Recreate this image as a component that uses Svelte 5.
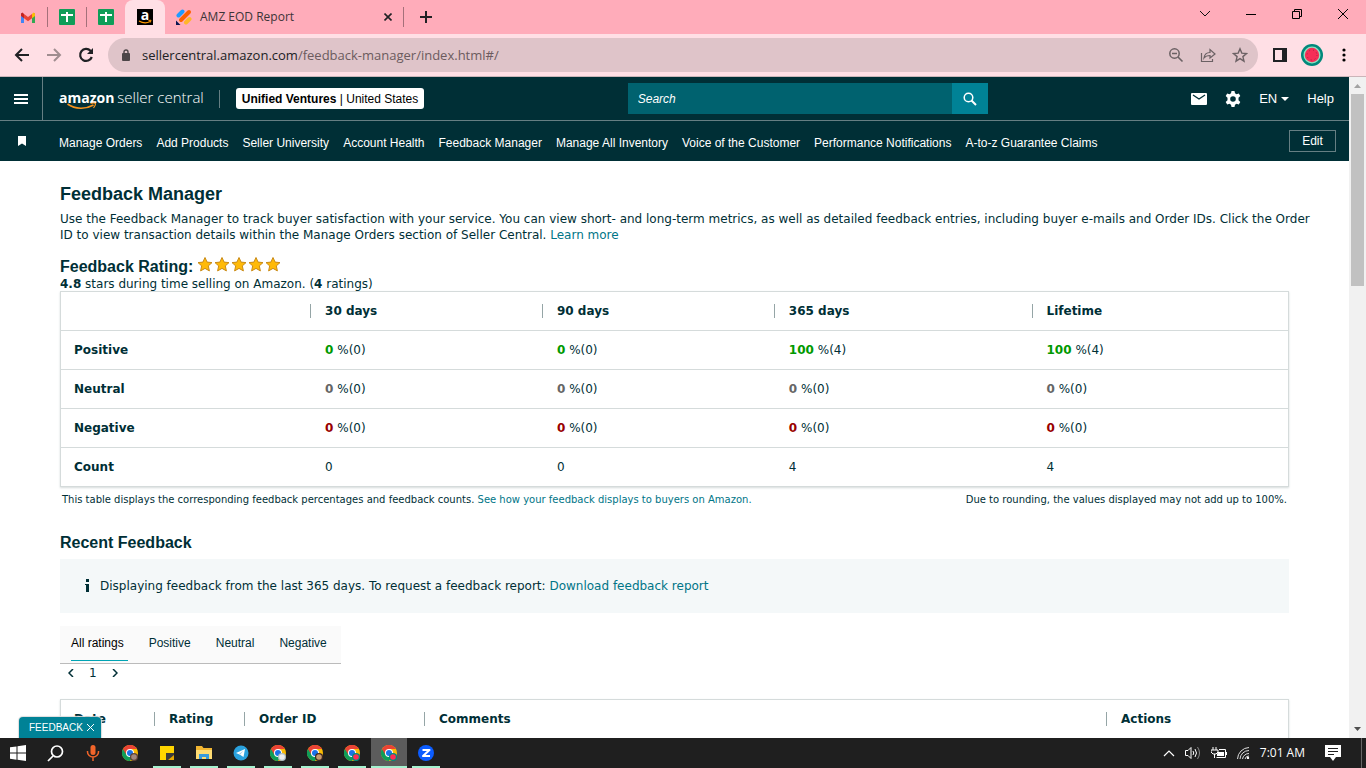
<script>
	const navLinks = [
		"Manage Orders", "Add Products", "Seller University", "Account Health", "Feedback Manager",
		"Manage All Inventory", "Voice of the Customer", "Performance Notifications", "A-to-z Guarantee Claims",
	];
	const periods = ["30 days", "90 days", "365 days", "Lifetime"];
	const rows = [
		{name: "Positive", type: "positive", values: [[0, 0], [0, 0], [100, 4], [100, 4]]},
		{name: "Neutral", type: "neutral", values: [[0, 0], [0, 0], [0, 0], [0, 0]]},
		{name: "Negative", type: "negative", values: [[0, 0], [0, 0], [0, 0], [0, 0]]},
	];
	const counts = [0, 0, 4, 4];
	const filters = ["All ratings", "Positive", "Neutral", "Negative"];
	const columns = ["Date", "Rating", "Order ID", "Comments", "Actions"];
	const apps = [
		{name: "Chrome", icon: "chrome", badge: "#5d4037", dot: "#a1887f"},
		{name: "Sticky Notes", icon: "notes", open: true},
		{name: "File Explorer", icon: "folder", open: true},
		{name: "Telegram", icon: "telegram", open: true},
		{name: "Chrome profile 2", icon: "chrome", badge: "#b0bec5", dot: "#eceff1", open: true},
		{name: "Chrome profile 3", icon: "chrome", badge: "#3e2723", dot: "#c99a6b", open: true},
		{name: "Chrome profile 4", icon: "chrome", badge: "#00897b", dot: "#ff2d55", open: true},
		{name: "Chrome profile 5", icon: "chrome", badge: "#00897b", dot: "#ff2d55", open: true, active: true},
		{name: "Zoom", icon: "zoom", open: true},
	];

	let filter = $state("All ratings");
	let query = $state("");
	let url = $state("sellercentral.amazon.com/feedback-manager/index.html#/");
	let showWidget = $state(true);
	let host = $derived(url.split("/")[0]);
</script>

{#snippet sheet()}
	<svg width="16" height="16" viewBox="0 0 16 16"><rect width="16" height="16" rx="1" fill="#0f9d58" /><path d="M7 3h2v2h5v2H9v6H7V7H2V5h5z" fill="#fff" /></svg>
{/snippet}

{#snippet chrome(app)}
	<svg width="16" height="16" viewBox="0 0 16 16">
		<circle cx="8" cy="8" r="8" fill="#fbbc04" />
		<path d="M1 4a8 8 0 0 0 7 12l3.500-6L8 8z" fill="#0f9d58" />
		<path d="M8 4h7A8 8 0 0 0 1 4l3.500 6z" fill="#ea4335" />
		<circle cx="8" cy="8" r="4" fill="#fff" />
		<circle cx="8" cy="8" r="3" fill="#1a73e8" />
		<circle cx="12" cy="12" r="4" fill={app.badge} />
		<circle cx="12" cy="12" r="2.800" fill={app.dot} />
	</svg>
{/snippet}

<div class="window">
	<div class="tabs">
		<button class="tab" aria-label="Gmail">
			<svg width="14" height="11" viewBox="0 0 14 11"><path d="M0 1v10h3V4z" fill="#4285f4" /><path d="M14 1v10h-3V4z" fill="#34a853" /><path d="M0 1.500V4l3 2.300V2L1.500.5z" fill="#c5221f" /><path d="M14 1.500V4l-3 2.300V2L12.500.5z" fill="#fbbc04" /><path d="m3 2 4 3 4-3v4.300L7 9.200 3 6.300z" fill="#ea4335" /></svg>
		</button>
		<button class="tab ruled" aria-label="Sheets">{@render sheet()}</button>
		<button class="tab ruled" aria-label="Sheets">{@render sheet()}</button>
		<button class="tab current" aria-label="Amazon">
			<span class="favicon">a</span>
			<svg class="smile" width="16" height="16" viewBox="0 0 16 16"><path d="M2 12q6 3.500 11 .5" fill="none" stroke="#f90" stroke-width="1.300" /><path d="m11.500 11.500 2.500-.3-.7 2.300" fill="none" stroke="#f90" /></svg>
		</button>
		<button class="tab report">
			<svg width="16" height="16" viewBox="0 0 16 16"><path d="m2.500 6.500 4-4" stroke="#1e9bff" stroke-width="4" stroke-linecap="round" /><path d="m5 11 8-8" stroke="#ff6100" stroke-width="4" stroke-linecap="round" /><path d="m10 13.500 3.500-3.500" stroke="#ffb629" stroke-width="4" stroke-linecap="round" /><path d="M0 11.500V16h4.500z" fill="#0a1551" /></svg>
			<span>AMZ EOD Report</span>
			<svg class="close" width="8" height="8" viewBox="0 0 8 8"><path d="m.5.500 7 7M7.500.500l-7 7" stroke="#202124" stroke-width="1.600" /></svg>
		</button>
		<button class="new-tab" aria-label="New tab"><svg width="12" height="12" viewBox="0 0 12 12"><path d="M6 0v12M0 6h12" stroke="#202124" stroke-width="2" /></svg></button>
		<div class="controls">
			<button aria-label="Search tabs"><svg width="12" height="12" viewBox="0 0 12 12"><path d="m1 3 5 5 5-5" fill="none" stroke="#111" /></svg></button>
			<button aria-label="Minimize"><svg width="10" height="12" viewBox="0 0 10 12"><path d="M0 6.500h10" stroke="#000" /></svg></button>
			<button aria-label="Restore"><svg width="10" height="12" viewBox="0 0 10 12"><path d="M.5 3.500h7v7h-7zM2.500 3.500v-2h7v7h-2" fill="none" stroke="#000" /></svg></button>
			<button aria-label="Close window"><svg width="10" height="12" viewBox="0 0 10 12"><path d="m0 1 10 10M10 1 0 11" stroke="#000" /></svg></button>
		</div>
	</div>

	<div class="toolbar">
		<button aria-label="Back"><svg width="16" height="16" viewBox="0 0 16 16"><path d="M15 8H2M8 2 2 8l6 6" fill="none" stroke="#202124" stroke-width="2" /></svg></button>
		<button aria-label="Forward"><svg width="16" height="16" viewBox="0 0 16 16"><path d="M1 8h13M8 2l6 6-6 6" fill="none" stroke="#a08d90" stroke-width="2" /></svg></button>
		<button aria-label="Reload"><svg width="16" height="16" viewBox="0 0 16 16"><path d="M13.800 10a6 6 0 1 1-1.300-6.200L14 5.500" fill="none" stroke="#202124" stroke-width="2.200" /><path d="M15 1v6H9z" fill="#202124" /></svg></button>
		<div class="omnibox">
			<svg width="10" height="12" viewBox="0 0 10 12"><rect x="1" y="4" width="8" height="8" rx="1" fill="#4b4547" /><path d="M3 5V3a2 2 0 0 1 4 0v2" fill="none" stroke="#4b4547" stroke-width="1.400" /></svg>
			<div class="url">
				<span aria-hidden="true"><b>{host}</b>{url.slice(host.length)}</span>
				<input aria-label="Address" bind:value={url} />
			</div>
			<button aria-label="Zoom"><svg width="16" height="16" viewBox="0 0 16 16"><circle cx="6.500" cy="6.500" r="4.700" fill="none" stroke="#6b6164" stroke-width="1.500" /><path d="m10 10 4.500 4.500M4 6.500h5" stroke="#6b6164" stroke-width="1.600" /></svg></button>
			<button aria-label="Share"><svg width="16" height="16" viewBox="0 0 16 16"><path d="M1.500 6v8.500h11V12M4 11c.5-4 2.500-5.500 6-5.500v-3L15 7l-5 4V8.500c-2.500 0-4.500.5-6 2.500z" fill="none" stroke="#6b6164" stroke-width="1.200" /></svg></button>
			<button aria-label="Bookmark"><svg width="16" height="16" viewBox="0 0 16 16"><path d="m8 1.800 1.800 4.300 4.700.4-3.600 3.100 1.100 4.600L8 11.700l-4 2.500 1.100-4.600-3.600-3.100 4.700-.4z" fill="none" stroke="#6b6164" stroke-width="1.400" /></svg></button>
		</div>
		<button aria-label="Side panel"><svg width="14" height="14" viewBox="0 0 14 14"><path d="M0 0h14v14H0zM2 2v10h7V2z" fill="#202124" fill-rule="evenodd" /></svg></button>
		<button aria-label="Profile"><svg width="22" height="22" viewBox="0 0 22 22"><circle cx="11" cy="11" r="11" fill="#00897b" /><circle cx="11" cy="11" r="8.500" fill="#8fe0c0" /><circle cx="11" cy="11" r="7.200" fill="#f62e57" /><circle cx="11" cy="11" r="5" fill="none" stroke="#a5253f" stroke-dasharray="1 3" /></svg></button>
		<button aria-label="Menu"><svg width="4" height="14" viewBox="0 0 4 14"><circle cx="2" cy="2" r="1.600" /><circle cx="2" cy="7" r="1.600" /><circle cx="2" cy="12" r="1.600" /></svg></button>
	</div>

	<div class="viewport">
		<div class="page">
			<header>
				<div class="top">
					<button class="side" aria-label="Open menu"><svg width="14" height="10" viewBox="0 0 14 10"><path d="M0 1h14M0 5h14M0 9h14" stroke="#fff" stroke-width="2" /></svg></button>
					<a class="logo" href="#home">
						<b>amazon</b>
						<span>seller central</span>
						<svg width="30" height="9" viewBox="0 0 30 9"><path d="M.5 2c8 5.500 18 5.500 26 1" fill="none" stroke="#f7931e" stroke-width="1.600" /><path d="M23.500 1.500q4-1 5 0 .3 1.500-2 4.500" fill="none" stroke="#f7931e" stroke-width="1.200" /></svg>
					</a>
					<button class="account"><b>Unified Ventures</b> | United States</button>
					<form class="search" onsubmit={(e) => e.preventDefault()}>
						<input type="text" aria-label="Search" placeholder="Search" bind:value={query} />
						<button aria-label="Go"><svg width="14" height="14" viewBox="0 0 14 14"><circle cx="5.500" cy="5.500" r="4.300" fill="none" stroke="#fff" stroke-width="1.500" /><path d="m8.500 8.500 4.500 4.500" stroke="#fff" stroke-width="2" /></svg></button>
					</form>
					<div class="tools">
						<a href="#messages" aria-label="Messages"><svg width="16" height="12" viewBox="0 0 16 12"><rect width="16" height="12" rx="1" fill="#fff" /><path d="m2 2 6 4 6-4" fill="none" stroke="#002f36" stroke-width="1.300" /></svg></a>
						<a href="#settings" aria-label="Settings"><svg width="16" height="16" viewBox="0 0 16 16"><path d="M6.500 0h3l.5 2.300 1.500.9 2.300-.8 1.500 2.700-1.800 1.600v2.600l1.800 1.600-1.500 2.700-2.300-.8-1.500.9-.5 2.300h-3L6 13.700l-1.500-.9-2.300.8-1.500-2.700 1.800-1.600V6.700L.7 5.100l1.500-2.700 2.300.8L6 2.300zM8 5.200a2.800 2.800 0 1 0 0 5.600 2.800 2.800 0 0 0 0-5.600z" fill="#fff" fill-rule="evenodd" /></svg></a>
						<button>EN <svg width="8" height="4" viewBox="0 0 8 4"><path d="M0 0h8L4 4z" fill="#fff" /></svg></button>
						<a href="#help">Help</a>
					</div>
				</div>
				<nav>
					<button class="side" aria-label="Favourites"><svg width="8" height="10" viewBox="0 0 8 10"><path d="M0 0h8v10L4 7.500 0 10z" fill="#fff" /></svg></button>
					{#each navLinks as link}
						<a href="#nav">{link}</a>
					{/each}
					<button class="edit">Edit</button>
				</nav>
			</header>

			<main>
				<h1>Feedback Manager</h1>
				<p>Use the Feedback Manager to track buyer satisfaction with your service. You can view short- and long-term metrics, as well as detailed feedback entries, including buyer e-mails and Order IDs. Click the Order ID to view transaction details within the Manage Orders section of Seller Central. <a href="#learn">Learn more</a></p>
				<div class="rating">
					<h2>Feedback Rating:</h2>
					{#each [1, 2, 3, 4, 5] as _}
						<svg width="17" height="16" viewBox="0 0 17 16"><path d="m8 .5 2.100 4.600 4.900.5-3.700 3.300 1.100 5L8 11.400l-4.400 2.500 1.100-5L1 5.600l4.900-.5z" fill="#ffba08" stroke="#c98a17" stroke-linejoin="round" /></svg>
					{/each}
				</div>
				<div class="stars"><b>4.8</b> stars during time selling on Amazon. (<b>4</b> ratings)</div>

				<table class="summary">
					<thead>
						<tr>
							<td></td>
							{#each periods as period}
								<th scope="col"><span>{period}</span></th>
							{/each}
						</tr>
					</thead>
					<tbody>
						{#each rows as row}
							<tr>
								<th scope="row">{row.name}</th>
								{#each row.values as [percent, count]}
									<td><b class={row.type}>{percent}</b> %({count})</td>
								{/each}
							</tr>
						{/each}
						<tr>
							<th scope="row">Count</th>
							{#each counts as count}
								<td>{count}</td>
							{/each}
						</tr>
					</tbody>
				</table>
				<div class="notes">
					<span>This table displays the corresponding feedback percentages and feedback counts. <a href="#display">See how your feedback displays to buyers on Amazon.</a></span>
					<span>Due to rounding, the values displayed may not add up to 100%.</span>
				</div>

				<h2>Recent Feedback</h2>
				<div class="info">
					<svg width="6" height="14" viewBox="0 0 6 14"><path d="M2 0h3v3H2zM1 5h4v8H2V6H1z" fill="#002f36" /></svg>
					<span>Displaying feedback from the last 365 days. To request a feedback report: <a href="#download">Download feedback report</a></span>
				</div>
				<div class="filters">
					{#each filters as item}
						<button class:selected={filter === item} onclick={() => (filter = item)}>{item}</button>
					{/each}
				</div>
				<div class="pager">
					<button aria-label="Previous"><svg width="6" height="8" viewBox="0 0 6 8"><path d="M5 0 1 4l4 4" fill="none" stroke="#002f36" stroke-width="1.500" /></svg></button>
					<span>1</span>
					<button aria-label="Next"><svg width="6" height="8" viewBox="0 0 6 8"><path d="m1 0 4 4-4 4" fill="none" stroke="#002f36" stroke-width="1.500" /></svg></button>
				</div>
				<table class="recent">
					<thead>
						<tr>
							{#each columns as column}
								<th scope="col"><span>{column}</span></th>
							{/each}
						</tr>
					</thead>
				</table>
			</main>
			{#if showWidget}
				<div class="widget">
					<button>FEEDBACK</button>
					<button aria-label="Close feedback" onclick={() => (showWidget = false)}><svg width="7" height="7" viewBox="0 0 7 7"><path d="m0 0 7 7M7 0 0 7" stroke="#fff" /></svg></button>
				</div>
			{/if}
		</div>
		<div class="scrollbar">
			<svg width="17" height="17" viewBox="0 0 17 17"><path d="M5 11h7L8.500 7z" fill="#a3a3a3" /></svg>
			<div class="thumb"></div>
			<svg width="17" height="17" viewBox="0 0 17 17"><path d="M5 6h7l-3.500 4z" fill="#505050" /></svg>
		</div>
	</div>

	<footer>
		<button aria-label="Start"><svg width="16" height="16" viewBox="0 0 16 16"><path d="M0 2.300 6.500 1.400V7.600H0zM7.500 1.200 16 0v7.600H7.500zM0 8.600h6.500v6.100L0 13.800zM7.500 8.600H16V16l-8.500-1.200z" fill="#fff" /></svg></button>
		<button aria-label="Search"><svg width="17" height="17" viewBox="0 0 17 17"><circle cx="10" cy="6.500" r="5.500" fill="none" stroke="#fff" stroke-width="1.700" /><path d="m6 11-5 5" stroke="#fff" stroke-width="1.700" /></svg></button>
		<button class="mic" aria-label="Voice"><svg width="14" height="16" viewBox="0 0 14 16"><rect x="4.500" width="5" height="10" rx="2.500" fill="#f2652a" /><path d="M1.500 6v1a5.500 5 0 0 0 11 0V6M7 12v4" fill="none" stroke="#f2652a" stroke-width="1.500" /></svg></button>
		{#each apps as app}
			<button aria-label={app.name} class:open={app.open} class:active={app.active}>
				{#if app.icon === "chrome"}
					{@render chrome(app)}
				{:else if app.icon === "notes"}
					<svg width="16" height="16" viewBox="0 0 16 16"><path d="M1 1h14v14H1z" fill="#ffd500" /><path d="M7 8h8v7H7z" fill="#3c3c3c" /><path d="M9 15 15 10v5z" fill="#e5a800" /></svg>
				{:else if app.icon === "folder"}
					<svg width="16" height="16" viewBox="0 0 16 16"><path d="M0 1h6l1.500 2H16v11H0z" fill="#f2b632" /><path d="M0 5h16v9H0z" fill="#ffdc73" /><path d="M3 14V9h10v5h-3v-2H6v2z" fill="#3a9bdc" /></svg>
				{:else if app.icon === "telegram"}
					<svg width="16" height="16" viewBox="0 0 16 16"><circle cx="8" cy="8" r="7.500" fill="#2aa1de" /><path d="m3 8 9-4-1.500 8L7 9.700z" fill="#fff" /><path d="m7 9.700 3.500-4L6 9z" fill="#9ccbe8" /></svg>
				{:else}
					<svg width="16" height="16" viewBox="0 0 16 16"><circle cx="8" cy="8" r="8" fill="#0b5cff" /><path d="M4.500 5h7L5 11h7" fill="none" stroke="#fff" stroke-width="2" stroke-linejoin="round" /></svg>
				{/if}
			</button>
		{/each}
		<div class="tray">
			<svg width="12" height="8" viewBox="0 0 12 8"><path d="m1 7 5-5 5 5" fill="none" stroke="#fff" stroke-width="1.200" /></svg>
			<svg width="16" height="14" viewBox="0 0 16 14"><path d="M.5 4.500H3l3-3v11l-3-3H.5zM8 5q1.500 2 0 4M10 3q3 4 0 8" fill="none" stroke="#fff" /><path d="M12.500 1q4 6 0 12" fill="none" stroke="#888" /></svg>
			<svg width="16" height="12" viewBox="0 0 16 12"><path d="M2 0v3M5 0v3M0 3h7v2L5 7H2L0 5zM3.500 7v4" fill="none" stroke="#fff" /><path d="M8 2.500h6.500v8h-9M15.500 5v3" fill="none" stroke="#fff" /><path d="M7 5h6v4H6V7z" fill="#fff" /></svg>
			<svg width="13" height="12" viewBox="0 0 13 12"><path d="M.5 12A12 12 0 0 1 12 .5M3 12a9 9 0 0 1 9-8.500M5.500 12A6.500 6.500 0 0 1 12 6.500M8 12a4 4 0 0 1 4-3" fill="none" stroke="#ddd" /><circle cx="11" cy="11" r="1.200" fill="#fff" /></svg>
			<time>7:01 AM</time>
			<svg class="notice" width="16" height="16" viewBox="0 0 16 16"><path d="M0 0h16v12h-5l-3 4-3-4H0z" fill="#fff" /><path d="M3 3.500h10M3 6.500h10M3 9.500h6" stroke="#1f1f1f" /></svg>
		</div>
	</footer>
</div>

<style>
	:global(body) {
		margin: 0;
	}
	.window {
		display: flex;
		flex-direction: column;
		height: 100vh;
		overflow: hidden;
		background: #fff;
		color: #002f36;
		font: 12px/16px "DejaVu Sans", sans-serif;
	}
	.window * {
		box-sizing: border-box;
	}
	svg {
		display: block;
		flex: none;
	}
	button {
		display: flex;
		align-items: center;
		justify-content: center;
		padding: 0;
		border: 0;
		background: none;
		color: inherit;
		font: inherit;
	}
	input {
		border: 0;
		outline: 0;
		padding: 0;
		font: inherit;
	}
	a {
		color: #007587;
		text-decoration: none;
	}

	/* browser */
	.tabs {
		display: flex;
		flex: none;
		height: 34px;
		padding-left: 8px;
		background: #ffacba;
		color: #3c3437;
		font: 12px/16px "Open Sans", sans-serif;
	}
	.tab {
		width: 39px;
		position: relative;
	}
	.tab.ruled::before, .report::after {
		content: "";
		position: absolute;
		left: 0;
		top: 7px;
		width: 1px;
		height: 20px;
		background: #a5707a;
	}
	.tab.current {
		width: 40px;
		border-radius: 8px 8px 0 0;
		background: #ffdfe5;
	}
	.favicon {
		width: 16px;
		height: 16px;
		background: #000;
		color: #fff;
		font-size: 14px;
		font-weight: 700;
		line-height: 11px;
	}
	.smile {
		position: absolute;
		left: 12px;
		top: 9px;
	}
	.tab.report {
		width: 239px;
		gap: 8px;
		padding: 0 12px 0 11px;
	}
	.report::after {
		left: auto;
		right: 0;
	}
	.report .close {
		margin-left: auto;
	}
	.new-tab {
		width: 44px;
	}
	.controls {
		display: flex;
		margin-left: auto;
		padding-bottom: 6px;
	}
	.controls button {
		width: 46px;
	}
	.toolbar {
		display: flex;
		align-items: center;
		flex: none;
		height: 43px;
		padding: 0 6px;
		border-bottom: 1px solid #cbb5b9;
		background: #ffdfe5;
	}
	.toolbar button {
		width: 32px;
		height: 32px;
	}
	.omnibox {
		display: flex;
		align-items: center;
		flex: 1;
		height: 34px;
		margin: 0 6px;
		padding: 0 2px 0 13px;
		border-radius: 17px;
		background: #dfc4c9;
	}
	.url {
		position: relative;
		flex: 1;
		margin-left: 11px;
		color: #6b5b5e;
		font: 13px/20px "Open Sans", sans-serif;
	}
	.url b {
		color: #202124;
		font-weight: 400;
	}
	.url input {
		position: absolute;
		inset: 0;
		width: 100%;
		background: none;
		color: transparent;
		caret-color: #202124;
	}

	/* seller central */
	.viewport {
		display: flex;
		flex: 1;
		min-height: 0;
	}
	.page {
		position: relative;
		flex: 1;
		overflow: hidden;
	}
	header {
		background: #002f36;
		color: #fff;
		font: 12px/16px "Liberation Sans", Arial, sans-serif;
	}
	header a {
		color: #fff;
	}
	.top {
		display: flex;
		align-items: center;
		height: 44px;
		border-bottom: 1px solid #667f83;
	}
	.side {
		flex: none;
		width: 43px;
		height: 43px;
	}
	.top .side {
		border-right: 1px solid #667f83;
	}
	.logo {
		display: flex;
		align-items: baseline;
		gap: 3px;
		position: relative;
		margin-left: 16px;
		padding: 0 16px 3px 0;
		background: linear-gradient(#667f83, #667f83) right / 1px 18px no-repeat;
		font: 14px/20px "Open Sans", sans-serif;
	}
	.logo span {
		font-size: 15px;
		font-weight: 300;
	}
	.logo svg {
		position: absolute;
		left: 8px;
		bottom: 0;
	}
	.account {
		display: block;
		height: 21px;
		margin-left: 16px;
		padding: 0 6px;
		border-radius: 3px;
		background: #fff;
		color: #000;
	}
	.search {
		display: flex;
		width: 360px;
		height: 31px;
		margin: 0 auto;
	}
	.search input {
		flex: 1;
		min-width: 0;
		padding: 0 10px;
		background: #00626f;
		color: #fff;
	}
	.search input::placeholder {
		color: #fff;
		font-style: italic;
		opacity: 1;
	}
	.search button {
		width: 36px;
		background: #008296;
	}
	.tools {
		display: flex;
		align-items: center;
		gap: 18px;
		padding-right: 15px;
		font-size: 13px;
	}
	.tools button {
		gap: 4px;
	}
	nav {
		display: flex;
		align-items: center;
		gap: 14px;
		height: 40px;
		padding-right: 13px;
		white-space: nowrap;
	}
	nav a {
		padding-top: 4px;
	}
	nav .side {
		margin-right: 2px;
	}
	.edit {
		width: 47px;
		height: 22px;
		margin-left: auto;
		border: 1px solid #667f83;
	}
	main {
		padding: 21px 60px 0;
	}
	h1, h2 {
		margin: 0;
		font: bold 18px/24px "Liberation Sans", Arial, sans-serif;
	}
	h2 {
		font-size: 16px;
		line-height: 20px;
	}
	p {
		margin: 5px -24px 14px 0;
	}
	.rating {
		display: flex;
	}
	.rating h2 {
		margin-right: 4px;
	}
	.stars {
		line-height: 14px;
	}
	table {
		width: 100%;
		table-layout: fixed;
		border-collapse: separate;
		border-spacing: 0;
		border: 1px solid #d5dbdb;
		box-shadow: 0 1px 2px #d5dbdb;
	}
	th, td {
		height: 39px;
		padding: 0 15px;
		text-align: left;
	}
	tbody th:first-child {
		padding-left: 13px;
	}
	tbody th, tbody td {
		border-top: 1px solid #d5dbdb;
	}
	thead th, thead td {
		height: 38px;
		padding: 0;
	}
	thead span {
		display: block;
		padding-left: 14px;
		border-left: 1px solid #95a5a6;
		line-height: 14px;
	}
	.summary thead td:first-child {
		width: 20.3%;
	}
	.summary thead th:nth-child(2), .summary thead th:nth-child(3) {
		width: 18.9%;
	}
	.summary thead th:nth-child(4) {
		width: 21%;
	}
	.positive {
		color: #090;
	}
	.neutral {
		color: #666;
	}
	.negative {
		color: #900;
	}
	.notes {
		display: flex;
		justify-content: space-between;
		margin: 5px 2px 25px;
		font-size: 10px;
	}
	.info {
		display: flex;
		align-items: center;
		gap: 10px;
		height: 54px;
		margin: 6px 0 13px;
		padding: 0 24px;
		background: #f4f8f9;
	}
	.filters {
		display: flex;
		width: fit-content;
		gap: 21px;
		padding: 0 10px 2px 11px;
		border-bottom: 1px solid #bbb;
		background: #fafafa;
		font: 12px/34px "Liberation Sans", Arial, sans-serif;
	}
	.filters button {
		height: 35px;
		padding-right: 4px;
		border-bottom: 1px solid transparent;
	}
	.filters button.selected {
		border-bottom: 1px solid #00a4b4;
		color: #000;
	}
	.pager {
		display: flex;
		gap: 15px;
		padding: 0 8px;
		margin: 1px 0 18px;
	}
	.recent th:nth-child(1) {
		width: 93px;
	}
	.recent th:nth-child(2) {
		width: 90px;
	}
	.recent th:nth-child(3) {
		width: 180px;
	}
	.recent th:nth-child(5) {
		width: 182px;
	}
	.recent th:first-child span {
		padding-left: 13px;
		border: 0;
	}
	.widget {
		display: flex;
		gap: 4px;
		position: absolute;
		left: 19px;
		bottom: 0;
		height: 21px;
		padding: 0 7px 0 10px;
		border-radius: 4px 4px 0 0;
		background: #008296;
		box-shadow: 0 0 1px 1px #ddd;
		color: #fff;
		font: 10px/16px "Liberation Sans", Arial, sans-serif;
	}
	.scrollbar {
		display: flex;
		flex-direction: column;
		width: 17px;
		background: #f1f1f1;
	}
	.thumb {
		height: 29%;
		margin: 0 2px auto;
		background: #c1c1c1;
	}

	/* taskbar */
	footer {
		display: flex;
		gap: 1px;
		flex: none;
		height: 30px;
		background: #1f1f1f;
		color: #fff;
		font: 12px/16px "Open Sans", sans-serif;
	}
	footer button {
		width: 36px;
		position: relative;
	}
	footer .mic {
		width: 37px;
	}
	footer .open::after {
		content: "";
		position: absolute;
		left: 4px;
		right: 4px;
		bottom: 0;
		height: 2px;
		background: #a5f2cf;
	}
	footer .active {
		background: #5c5c5c;
	}
	footer .active::after {
		left: 0;
		right: 0;
	}
	.tray {
		display: flex;
		align-items: center;
		gap: 10px;
		margin-left: auto;
		margin-right: 4px;
		padding-right: 20px;
		border-right: 1px solid #666;
	}
	.notice {
		margin-left: 10px;
	}
</style>
